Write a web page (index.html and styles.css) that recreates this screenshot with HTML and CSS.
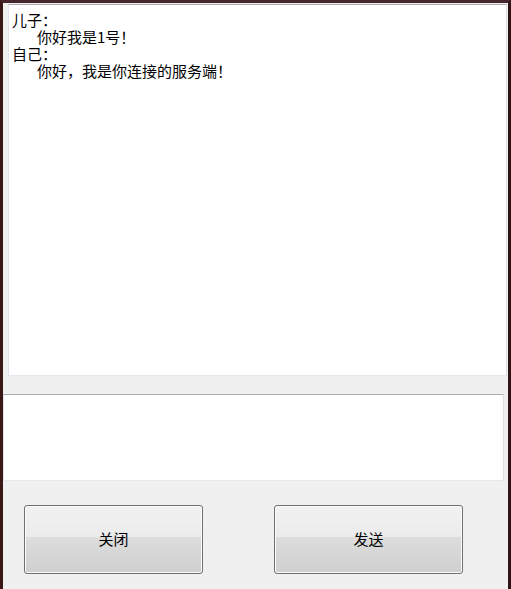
FILE: index.html
```html
<!DOCTYPE html>
<html>
<head>
<meta charset="utf-8">
<link rel="stylesheet" href="styles.css">
</head>
<body>
<div class="frame">
  <div class="log">
    <div class="speaker">儿子：</div>
    <div class="msg">你好我是1号！</div>
    <div class="speaker">自己：</div>
    <div class="msg">你好，我是你连接的服务端！</div>
  </div>
  <div class="input"></div>
  <div class="buttons">
    <button class="btn btn-close">关闭</button>
    <button class="btn btn-send">发送</button>
  </div>
</div>
</body>
</html>
```

FILE: styles.css
```css
html, body {
  margin: 0;
  padding: 0;
  width: 511px;
  height: 589px;
  overflow: hidden;
  background: #f0f0f0;
}

.frame {
  box-sizing: border-box;
  width: 511px;
  height: 589px;
  border-top: 3px solid #45262d;
  border-left: 3px solid #3a1818;
  border-right: 3px solid #2e1414;
  background: #f0f0f0;
  display: flex;
  flex-direction: column;
  font-family: "Noto Sans CJK SC", "Noto Sans", sans-serif;
  font-size: 15px;
  color: #000;
}

.log {
  box-sizing: border-box;
  margin: 1px 0 0 5px;
  width: 499px;
  height: 372px;
  background: #fff;
  border-top: 1px solid #abadb3;
  border-left: 1px solid #e2e3ea;
  border-right: 1px solid #dbdfe6;
  border-bottom: 1px solid #e3e9ef;
  padding: 6px 0 0 3px;
  line-height: 17px;
}

.msg {
  padding-left: 25px;
}

.input {
  box-sizing: border-box;
  margin-top: 18px;
  width: 501px;
  height: 87px;
  background: #fff;
  border-top: 1px solid #abadb3;
  border-left: 1px solid #e2e3ea;
  border-right: 1px solid #dbdfe6;
  border-bottom: 1px solid #e3e9ef;
}

.buttons {
  display: flex;
  margin-top: 24px;
  padding-left: 21px;
  gap: 71px;
}

.btn {
  box-sizing: border-box;
  height: 69px;
  border: 1px solid #707070;
  border-radius: 3px;
  box-shadow: inset 0 0 0 1px #fcfcfc;
  background: linear-gradient(to bottom, #f2f2f2 0%, #ebebeb 46%, #dddddd 46%, #cfcfcf 100%);
  font-family: "Noto Sans CJK SC", "Noto Sans", sans-serif;
  font-size: 15px;
  color: #000;
  padding: 0 0 3px 0;
}

.btn-close {
  width: 179px;
}

.btn-send {
  width: 189px;
}
```
